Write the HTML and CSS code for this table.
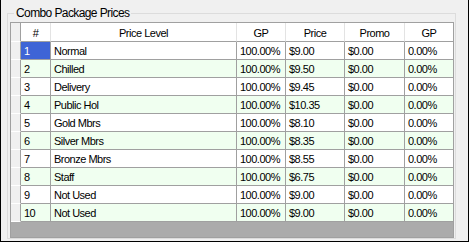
FILE: index.html
```html
<!DOCTYPE html>
<html>
<head>
<meta charset="utf-8">
<link rel="stylesheet" href="styles.css">
</head>
<body>
<div class="window">
  <div class="group">
    <div class="title">Combo Package Prices</div>
    <div class="grid">
      <div class="row head">
        <div class="cell rh"></div><div class="cell">#</div><div class="cell">Price Level</div><div class="cell">GP</div><div class="cell">Price</div><div class="cell">Promo</div><div class="cell">GP</div>
      </div>
      <div class="row">
        <div class="cell rh"></div><div class="cell sel">1</div><div class="cell">Normal</div><div class="cell">100.00%</div><div class="cell">$9.00</div><div class="cell">$0.00</div><div class="cell">0.00%</div>
      </div>
      <div class="row alt">
        <div class="cell rh"></div><div class="cell">2</div><div class="cell">Chilled</div><div class="cell">100.00%</div><div class="cell">$9.50</div><div class="cell">$0.00</div><div class="cell">0.00%</div>
      </div>
      <div class="row">
        <div class="cell rh"></div><div class="cell">3</div><div class="cell">Delivery</div><div class="cell">100.00%</div><div class="cell">$9.45</div><div class="cell">$0.00</div><div class="cell">0.00%</div>
      </div>
      <div class="row alt">
        <div class="cell rh"></div><div class="cell">4</div><div class="cell">Public Hol</div><div class="cell">100.00%</div><div class="cell">$10.35</div><div class="cell">$0.00</div><div class="cell">0.00%</div>
      </div>
      <div class="row">
        <div class="cell rh"></div><div class="cell">5</div><div class="cell">Gold Mbrs</div><div class="cell">100.00%</div><div class="cell">$8.10</div><div class="cell">$0.00</div><div class="cell">0.00%</div>
      </div>
      <div class="row alt">
        <div class="cell rh"></div><div class="cell">6</div><div class="cell">Silver Mbrs</div><div class="cell">100.00%</div><div class="cell">$8.35</div><div class="cell">$0.00</div><div class="cell">0.00%</div>
      </div>
      <div class="row">
        <div class="cell rh"></div><div class="cell">7</div><div class="cell">Bronze Mbrs</div><div class="cell">100.00%</div><div class="cell">$8.55</div><div class="cell">$0.00</div><div class="cell">0.00%</div>
      </div>
      <div class="row alt">
        <div class="cell rh"></div><div class="cell">8</div><div class="cell">Staff</div><div class="cell">100.00%</div><div class="cell">$6.75</div><div class="cell">$0.00</div><div class="cell">0.00%</div>
      </div>
      <div class="row">
        <div class="cell rh"></div><div class="cell">9</div><div class="cell">Not Used</div><div class="cell">100.00%</div><div class="cell">$9.00</div><div class="cell">$0.00</div><div class="cell">0.00%</div>
      </div>
      <div class="row alt">
        <div class="cell rh"></div><div class="cell">10</div><div class="cell">Not Used</div><div class="cell">100.00%</div><div class="cell">$9.00</div><div class="cell">$0.00</div><div class="cell">0.00%</div>
      </div>
    </div>
  </div>
</div>
</body>
</html>
```
FILE: styles.css
```css
body {
  margin: 0;
  background: #ffffff;
  font-family: "Liberation Sans", Arial, sans-serif;
  color: #000;
}
.window {
  box-sizing: border-box;
  width: 469px;
  height: 242px;
  border: 1px solid #000;
  border-top: 0;
  background: #f0f0f0;
  padding: 13px 0 0 6px;
}
.group {
  box-sizing: border-box;
  width: 449px;
  height: 226px;
  border: 1px solid #dcdcdc;
}
.title {
  display: block;
  width: fit-content;
  margin: -8px 0 0 6px;
  padding: 0 2px;
  background: #f0f0f0;
  font-size: 12px;
  line-height: 14px;
  letter-spacing: -0.6px;
}
.grid {
  box-sizing: border-box;
  margin: 2px 0 0 2px;
  width: 444px;
  height: 216px;
  border: 1px solid #a0a0a0;
  background: #ababab;
}
.row {
  display: grid;
  grid-template-columns: 10px 30px 186px 49px 59px 60px 48px;
  background: #ffffff;
}
.row.alt {
  background: #f0fff0;
}
.cell {
  box-sizing: border-box;
  height: 18px;
  padding: 1px 0 0 3px;
  line-height: 16px;
  font-size: 11px;
  letter-spacing: -0.5px;
  white-space: nowrap;
  overflow: hidden;
  border-right: 1px solid #a0a0a0;
  border-bottom: 1px solid #a0a0a0;
}
.cell:last-child {
  border-right: 0;
}
.head {
  background: #ffffff;
}
.head .cell {
  height: 19px;
  padding: 3px 0 0;
  line-height: 15px;
  text-align: center;
  border-right-color: #e3e3e3;
}
.head .cell:last-child {
  border-right: 0;
}
.cell.rh {
  padding: 0;
  background: #f0f0f0;
  border-right-color: #a0a0a0;
  border-bottom-color: #ffffff;
}
.cell.sel {
  background: #3e64d6;
  color: #ffffff;
}
```
